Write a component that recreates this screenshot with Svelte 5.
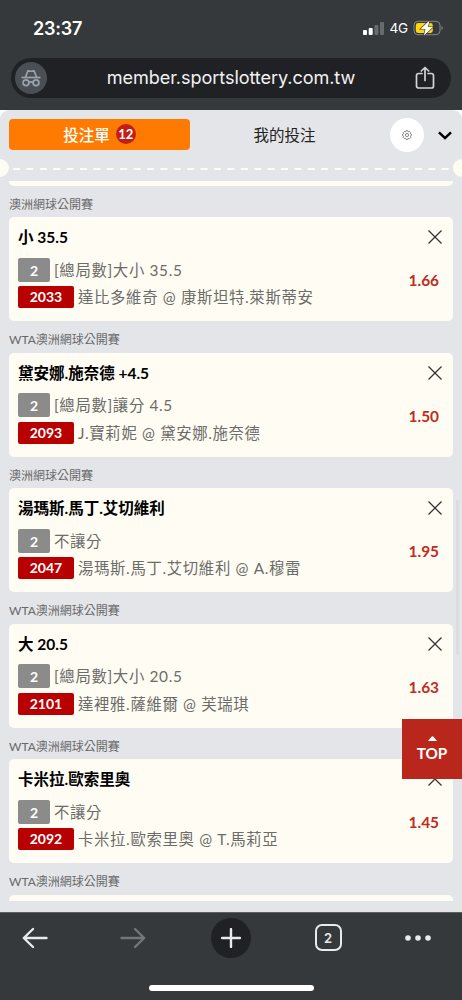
<script lang="ts">
    interface Bet {
        league: string;
        pick: string;
        market: string;
        code: string;
        match: string;
        odds: string;
    }

    const bets: Bet[] = [
        {
            league: "澳洲網球公開賽",
            pick: "小 35.5",
            market: "[總局數]大小 35.5",
            code: "2033",
            match: "達比多維奇 @ 康斯坦特.萊斯蒂安",
            odds: "1.66",
        },
        {
            league: "WTA澳洲網球公開賽",
            pick: "黛安娜.施奈德 +4.5",
            market: "[總局數]讓分 4.5",
            code: "2093",
            match: "J.寶莉妮 @ 黛安娜.施奈德",
            odds: "1.50",
        },
        {
            league: "澳洲網球公開賽",
            pick: "湯瑪斯.馬丁.艾切維利",
            market: "不讓分",
            code: "2047",
            match: "湯瑪斯.馬丁.艾切維利 @ A.穆雷",
            odds: "1.95",
        },
        {
            league: "WTA澳洲網球公開賽",
            pick: "大 20.5",
            market: "[總局數]大小 20.5",
            code: "2101",
            match: "達裡雅.薩維爾 @ 芙瑞琪",
            odds: "1.63",
        },
        {
            league: "WTA澳洲網球公開賽",
            pick: "卡米拉.歐索里奧",
            market: "不讓分",
            code: "2092",
            match: "卡米拉.歐索里奧 @ T.馬莉亞",
            odds: "1.45",
        },
    ];
</script>

<div class="phone">
    <header class="browser-top">
        <div class="status-bar">
            <span class="time">23:37</span>
            <div class="status-icons">
                <svg width="21" height="13" viewBox="0 0 21 13">
                    <rect x="0" y="8" width="4" height="5" rx="1" fill="#fff" />
                    <rect x="5.7" y="6" width="4" height="7" rx="1" fill="#fff" />
                    <rect x="11.4" y="3" width="4" height="10" rx="1" fill="#686b6d" />
                    <rect x="17" y="0" width="4" height="13" rx="1" fill="#686b6d" />
                </svg>
                <span class="network">4G</span>
                <svg class="battery" width="31" height="18" viewBox="0 0 31 18">
                    <rect x="1" y="2.3" width="26" height="13.4" rx="4" fill="none" stroke="#85888a" />
                    <rect x="2.8" y="4.1" width="17" height="9.8" rx="2.3" fill="#ffd60a" />
                    <path d="M28.5 6.8c1.7.7 1.7 3.7 0 4.4z" fill="#85888a" />
                    <path
                        d="M16.5 1.5L7.5 10h5l-1.6 6.5L20 8h-5z"
                        fill="#fff"
                        stroke="#35393b"
                        stroke-width="1.2"
                        paint-order="stroke"
                    />
                </svg>
            </div>
        </div>
        <div class="address-bar">
            <span class="incognito">
                <svg width="20" height="18" viewBox="0 0 20 18" fill="none" stroke="#9da3aa" stroke-width="1.7">
                    <path d="M.5 8.5h19" />
                    <path d="M4.5 8L7 1.7c1 .7 5 .7 6 0L15.5 8" stroke-linejoin="round" />
                    <circle cx="5" cy="13.8" r="2.9" />
                    <circle cx="15" cy="13.8" r="2.9" />
                    <path d="M7.8 13.4c1-.8 3.4-.8 4.4 0" />
                </svg>
            </span>
            <span class="url">member.sportslottery.com.tw</span>
            <svg
                class="share"
                width="20"
                height="24"
                viewBox="0 0 20 24"
                fill="none"
                stroke="#d2d4d8"
                stroke-width="1.7"
                stroke-linecap="round"
                stroke-linejoin="round"
            >
                <path d="M7 7.5H3.6A2.1 2.1 0 0 0 1.5 9.6v10.3A2.1 2.1 0 0 0 3.6 22h12.8a2.1 2.1 0 0 0 2.1-2.1V9.6a2.1 2.1 0 0 0-2.1-2.1H13" />
                <path d="M10 14.5v-13M6.3 5L10 1.5 13.7 5" />
            </svg>
        </div>
    </header>

    <main class="page">
        <section class="slip">
            <nav class="tabs">
                <button class="tab active">投注單 <span class="count">12</span></button>
                <button class="tab">我的投注</button>
                <button class="settings" aria-label="設定">
                    <svg width="10" height="10" viewBox="0 0 20 20" fill="none" stroke="#777" stroke-width="1.7">
                        <path
                            d="M8 1.5h4l.7 2.3 2.5-1 2.3 2.5-1 2.4 2.2.9v3l-2.2 1 1 2.3-2.3 2.5-2.5-1-.7 2.2H8l-.9-2.3-2.4 1-2.3-2.4 1-2.4-2.2-.9v-3l2.2-1-1-2.3 2.3-2.5 2.4 1z"
                        />
                        <circle cx="10" cy="10" r="3.2" />
                    </svg>
                </button>
                <button class="collapse" aria-label="收合">
                    <svg width="14" height="9" viewBox="0 0 14 9" fill="none" stroke="#000" stroke-width="2.5">
                        <path d="M1 1.3l6 5.8 6-5.8" />
                    </svg>
                </button>
            </nav>

            <div class="perforation">
                <span class="notch"></span>
                <svg class="dashes" height="2" width="100%">
                    <line
                        x1="0"
                        y1="1"
                        x2="100%"
                        y2="1"
                        stroke="#fffdf3"
                        stroke-width="2"
                        stroke-dasharray="7 6.4"
                    />
                </svg>
                <span class="notch"></span>
            </div>

            <div class="bet-list">
                <div class="card-end"></div>
                {#each bets as bet}
                    <h3 class="league">{bet.league}</h3>
                    <article class="card">
                        <div class="info">
                            <strong class="pick">{bet.pick}</strong>
                            <div class="detail market">
                                <span class="tag">2</span>{bet.market}
                            </div>
                            <div class="detail">
                                <span class="tag code">{bet.code}</span>{bet.match}
                            </div>
                        </div>
                        <div class="side">
                            <svg width="14" height="14" viewBox="0 0 14 14" stroke="#333" stroke-width="1.3">
                                <path d="M.5.5l13 13M13.5.5l-13 13" />
                            </svg>
                            <span class="odds">{bet.odds}</span>
                        </div>
                    </article>
                {/each}
                <h3 class="league">WTA澳洲網球公開賽</h3>
                <article class="card"></article>
            </div>
        </section>
        <span class="scrollbar"></span>
        <button class="to-top">
            <svg width="9" height="5" viewBox="0 0 9 5"><path d="M0 5l3.5-4.3q1-.9 2 0L9 5z" fill="#fff" /></svg>
            TOP
        </button>
    </main>

    <footer class="browser-bottom">
        <div class="toolbar">
            <svg width="26" height="22" viewBox="0 0 26 22" class="nav-icon">
                <path d="M24.5 11H2M11 2L1.8 11l9.2 9" />
            </svg>
            <svg width="26" height="22" viewBox="0 0 26 22" class="nav-icon disabled">
                <path d="M1.5 11H24M15 2l9.2 9-9.2 9" />
            </svg>
            <span class="new-tab">
                <svg width="20" height="20" viewBox="0 0 20 20" class="nav-icon">
                    <path d="M10 1v18M1 10h18" />
                </svg>
            </span>
            <span class="tab-count">2</span>
            <svg width="26" height="6" viewBox="0 0 26 6" fill="#e8eaed">
                <circle cx="3" cy="3" r="2.8" />
                <circle cx="13" cy="3" r="2.8" />
                <circle cx="23" cy="3" r="2.8" />
            </svg>
        </div>
        <span class="home-indicator"></span>
    </footer>
</div>

<style>
    :global(body) {
        background: #35393b;
    }

    .phone {
        display: flex;
        flex-direction: column;
        width: 462px;
        height: 1000px;
        overflow: hidden;
        background: #35393b;
        font-family: Lato, "Noto Sans CJK TC", sans-serif;
    }

    svg {
        display: block;
        flex: none;
    }

    button {
        padding: 0;
        border: 0;
        font-family: inherit;
        background: none;
    }

    .browser-top {
        flex: none;
        box-sizing: border-box;
        height: 110px;
        font-family: Inter, "Liberation Sans", sans-serif;
        color: #fff;
    }

    .status-bar {
        display: flex;
        align-items: center;
        justify-content: space-between;
        box-sizing: border-box;
        height: 58px;
        padding: 0 18px 2px 33px;
    }

    .time {
        font-size: 18px;
        font-weight: 600;
        letter-spacing: -0.2px;
    }

    .status-icons {
        display: flex;
        align-items: center;
        gap: 5px;
    }

    .network {
        font-size: 13.6px;
        font-weight: 400;
        letter-spacing: -0.2px;
    }

    .address-bar {
        display: flex;
        align-items: center;
        justify-content: space-between;
        box-sizing: border-box;
        height: 40px;
        margin: 0 11px;
        padding: 0 16px 0 4px;
        border-radius: 20px;
        background: #202124;
    }

    .incognito {
        display: flex;
        align-items: center;
        justify-content: center;
        width: 32px;
        height: 32px;
        border-radius: 50%;
        background: #494f54;
    }

    .url {
        padding-bottom: 2px;
        font-size: 18.1px;
        letter-spacing: -0.08px;
        color: #f1f2f3;
    }

    .page {
        position: relative;
        flex: none;
        height: 802px;
        background: #fff;
    }

    .slip {
        display: flex;
        flex-direction: column;
        box-sizing: border-box;
        height: 802px;
        border-radius: 9px 9px 0 0;
        background: #e4e5e8;
    }

    .tabs {
        display: flex;
        align-items: center;
        height: 49px;
        padding: 0 9px;
    }

    .tab {
        display: flex;
        align-items: center;
        justify-content: center;
        box-sizing: border-box;
        width: 181px;
        height: 31px;
        margin-right: 4px;
        padding-bottom: 2px;
        border-radius: 4px;
        font-size: 15.5px;
        color: #222;
    }

    .tab.active {
        padding-bottom: 1px;
        background: #ff7a00;
        color: #fff;
        font-weight: 500;
    }

    .count {
        width: 20px;
        height: 20px;
        margin-left: 6px;
        border-radius: 50%;
        background: #c41d16;
        font-size: 13px;
        font-weight: 700;
        line-height: 20px;
    }

    .settings {
        display: flex;
        align-items: center;
        justify-content: center;
        width: 34px;
        height: 34px;
        margin-left: 11px;
        border-radius: 50%;
        background: #fff;
    }

    .collapse {
        margin-left: 14px;
        padding-top: 2px;
    }

    .perforation {
        display: flex;
        align-items: center;
        height: 18px;
        margin: 0 -9px;
    }

    .notch {
        flex: none;
        width: 18px;
        height: 18px;
        border-radius: 50%;
        background: #fffdf3;
    }

    .dashes {
        flex: 1;
        min-width: 0;
        margin: 2px 3px 0 4px;
    }

    .bet-list {
        height: 720px;
        margin-top: 4px;
        padding: 0 9px;
        overflow: hidden;
    }

    .card-end {
        height: 4.5px;
        border-radius: 0 0 5px 5px;
        background: #fffdf3;
    }

    .league {
        height: 31.55px;
        margin: 0;
        font-size: 12px;
        font-weight: 400;
        line-height: 37px;
        color: #68696b;
    }

    .card {
        display: flex;
        justify-content: space-between;
        box-sizing: border-box;
        height: 104px;
        padding: 8px 9px;
        border-radius: 5px;
        background: #fffdf3;
    }

    .pick {
        display: block;
        height: 32px;
        font-size: 15.5px;
        font-weight: 700;
        line-height: 25px;
        color: #000;
    }

    .detail {
        display: flex;
        align-items: center;
        height: 27px;
        font-size: 15.4px;
        letter-spacing: 0.65px;
        line-height: 22px;
        color: #6c6c6a;
        white-space: pre;
    }

    .market {
        margin-top: -1px;
        margin-bottom: 0.5px;
    }

    .tag {
        box-sizing: border-box;
        width: 32px;
        height: 24px;
        margin-right: 4px;
        border-radius: 2px;
        background: #8b8b8b;
        color: #fff;
        font-size: 14px;
        font-weight: 700;
        letter-spacing: 0;
        line-height: 25px;
        text-align: center;
    }

    .code {
        width: 56px;
        height: 22px;
        background: #b80000;
        line-height: 22px;
    }

    .side {
        display: flex;
        flex-direction: column;
        align-items: flex-end;
        padding: 5px 5px 0 0;
    }

    .side svg {
        margin-right: -3px;
    }

    .odds {
        margin-top: 26px;
        font-size: 15.4px;
        font-weight: 700;
        line-height: 20px;
        color: #c12b20;
    }

    .scrollbar {
        position: absolute;
        top: 390px;
        right: 3px;
        width: 3px;
        height: 155px;
        border-radius: 2px;
        background: #dcdde0;
    }

    .to-top {
        position: absolute;
        right: 0;
        bottom: 133px;
        display: flex;
        flex-direction: column;
        align-items: center;
        gap: 5px;
        width: 60px;
        height: 60px;
        padding-top: 17px;
        background: #b9261b;
        color: #fff;
        font-size: 15.3px;
        font-weight: 700;
        line-height: 14px;
    }

    .browser-bottom {
        display: flex;
        flex-direction: column;
        align-items: center;
        flex: 1;
        box-sizing: border-box;
        border-top: 1px solid #5d6062;
    }

    .toolbar {
        display: grid;
        grid-template-columns: 70px 126px 70px 124px 56px;
        align-items: center;
        justify-items: center;
        width: 100%;
        height: 49px;
    }

    .nav-icon {
        fill: none;
        stroke: #e8eaed;
        stroke-width: 2.4;
        stroke-linecap: round;
        stroke-linejoin: round;
    }

    .disabled {
        stroke: #747678;
    }

    .new-tab {
        display: flex;
        align-items: center;
        justify-content: center;
        width: 40px;
        height: 40px;
        border-radius: 50%;
        background: #202124;
    }

    .tab-count {
        box-sizing: border-box;
        width: 27px;
        height: 27px;
        border: 2px solid #e8eaed;
        border-radius: 7px;
        color: #e8eaed;
        font-family: Inter, sans-serif;
        font-size: 13px;
        font-weight: 600;
        line-height: 24px;
        text-align: center;
    }

    .home-indicator {
        width: 165px;
        height: 6px;
        margin-top: 23px;
        border-radius: 3px;
        background: #fff;
    }
</style>
